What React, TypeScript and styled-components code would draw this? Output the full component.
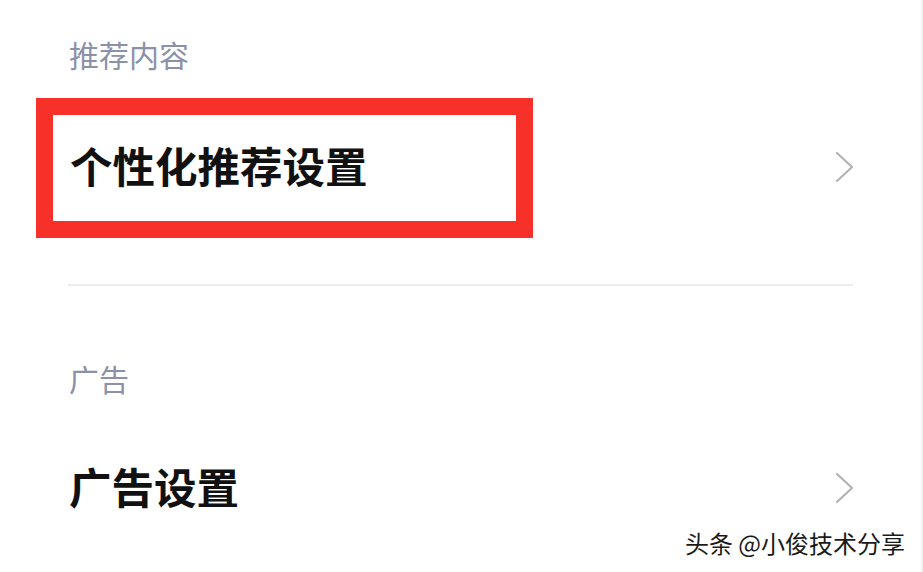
import React from "react";
import styled, { createGlobalStyle } from "styled-components";

const GlobalStyle = createGlobalStyle`
  html, body {
    margin: 0;
    padding: 0;
    background: #ffffff;
  }
  body {
    font-family: "Noto Sans CJK SC", "Noto Sans", sans-serif;
  }
`;

const Page = styled.div`
  position: relative;
  width: 923px;
  height: 572px;
  box-sizing: border-box;
  padding: 38px 68px 0 68px;
  background: #ffffff;
  overflow: hidden;
  border-right: 2px solid #f1f1f1;
`;

const SectionTitle = styled.div<{ $top?: number }>`
  margin-top: ${(p) => p.$top ?? 0}px;
  font-size: 30px;
  line-height: 32px;
  height: 32px;
  color: #8a91a8;
  padding-left: 1px;
`;

const Row = styled.div<{ $top?: number }>`
  display: flex;
  align-items: center;
  justify-content: space-between;
  height: 140px;
  margin-top: ${(p) => p.$top ?? 0}px;
`;

const Label = styled.div`
  font-size: 42.5px;
  line-height: 1;
  font-weight: 600;
  color: #111111;
  padding-left: 1px;
  margin-top: -5px;
`;

// red annotation frame drawn round the first row's label
const Highlight = styled.div`
  display: flex;
  align-items: center;
  box-sizing: border-box;
  width: 497px;
  height: 140px;
  margin-left: -32px;
  padding-left: 16px;
  border: 17px solid #f73029;
`;

const Chevron = styled.svg`
  width: 19px;
  height: 32px;
  margin-right: -1px;
  margin-top: -3px;
  flex-shrink: 0;
`;

const Divider = styled.div`
  margin-top: 46px;
  height: 2px;
  background: #ececec;
`;

const Watermark = styled.div`
  position: absolute;
  right: 16px;
  bottom: 16px;
  font-size: 24px;
  line-height: 26px;
  color: #1a1a1a;
  text-shadow: 1px 1px 0 #ffffff, -1px -1px 0 #ffffff, 1px -1px 0 #ffffff,
    -1px 1px 0 #ffffff;
  white-space: nowrap;
`;

const Arrow = () => (
  <Chevron viewBox="0 0 19 32">
    <polyline
      points="2,2 17,16 2,30"
      fill="none"
      stroke="#b3b3b3"
      strokeWidth="2.2"
      strokeLinecap="round"
      strokeLinejoin="round"
    />
  </Chevron>
);

const App: React.FC = () => {
  return (
    <>
      <GlobalStyle />
      <Page>
        <SectionTitle>推荐内容</SectionTitle>
        <Row $top={28}>
          <Highlight>
            <Label>个性化推荐设置</Label>
          </Highlight>
          <Arrow />
        </Row>

        <Divider />

        <SectionTitle $top={76}>广告</SectionTitle>
        <Row $top={25}>
          <Label>广告设置</Label>
          <Arrow />
        </Row>

        <Watermark>头条 @小俊技术分享</Watermark>
      </Page>
    </>
  );
};

export default App;
